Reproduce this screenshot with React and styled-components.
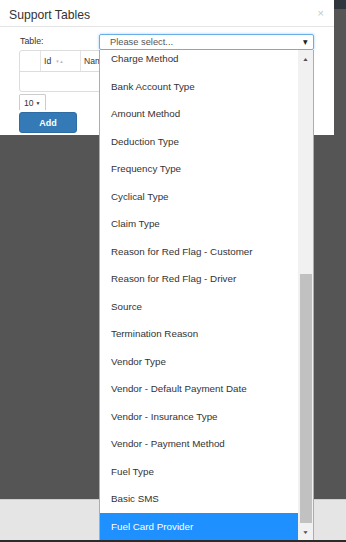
import React from 'react'
import styled, { createGlobalStyle } from 'styled-components'

const GlobalStyle = createGlobalStyle`
  html, body {
    margin: 0;
    padding: 0;
  }
  body {
    font-family: 'Liberation Sans', Arial, sans-serif;
    color: #333;
  }
`

const tables = [
  'Charge Method',
  'Bank Account Type',
  'Amount Method',
  'Deduction Type',
  'Frequency Type',
  'Cyclical Type',
  'Claim Type',
  'Reason for Red Flag - Customer',
  'Reason for Red Flag - Driver',
  'Source',
  'Termination Reason',
  'Vendor Type',
  'Vendor - Default Payment Date',
  'Vendor - Insurance Type',
  'Vendor - Payment Method',
  'Fuel Type',
  'Basic SMS',
  'Fuel Card Provider',
]

const App = () => {
  const selected = 'Fuel Card Provider'
  return (
    <>
      <GlobalStyle />
      <Page>
        <Modal>
          <Header>
            <Title>Support Tables</Title>
            <Close>×</Close>
          </Header>
          <Body>
            <FieldRow>
              <Label>Table:</Label>
              <SelectWrap>
                <Select>
                  <span>Please select...</span>
                  <Caret>▼</Caret>
                </Select>
                <Dropdown>
                  <Options>
                    {tables.map((t) => (
                      <Option key={t} active={t === selected}>
                        {t}
                      </Option>
                    ))}
                  </Options>
                  <Scrollbar>
                    <ScrollArrow>▲</ScrollArrow>
                    <Track>
                      <Thumb />
                    </Track>
                    <ScrollArrow>▼</ScrollArrow>
                  </Scrollbar>
                </Dropdown>
              </SelectWrap>
            </FieldRow>
            <Table>
              <HeadRow>
                <Cell width={21} />
                <Cell width={40}>
                  Id <Sort>▼▲</Sort>
                </Cell>
                <Cell>Name</Cell>
              </HeadRow>
              <BodyRow />
            </Table>
            <PageSize>
              10 <small>▼</small>
            </PageSize>
            <AddButton>Add</AddButton>
          </Body>
        </Modal>
        <Spacer />
        <Footer />
        <BottomLine />
      </Page>
    </>
  )
}

const Page = styled.div`
  width: 346px;
  height: 542px;
  display: flex;
  flex-direction: column;
  background: linear-gradient(#2f363d 0 9px, #555 9px);
  overflow: hidden;
`

const Modal = styled.div`
  width: 334px;
  height: 135px;
  background: #fff;
  flex-shrink: 0;
  position: relative;
  z-index: 2;
`

const Header = styled.div`
  height: 26px;
  border-bottom: 1px solid #e5e5e5;
  display: flex;
  align-items: center;
  justify-content: space-between;
  padding: 0 10px 0 9px;
`

const Title = styled.h4`
  margin: 0;
  font-size: 12.2px;
  font-weight: normal;
  color: #333;
  padding-top: 3px;
`

const Close = styled.span`
  font-size: 11px;
  color: #c8c8c8;
  margin-top: -1px;
`

const Body = styled.div`
  padding: 7px 0 0 19px;
`

const FieldRow = styled.div`
  display: flex;
  align-items: center;
  height: 16px;
`

const Label = styled.label`
  width: 80px;
  font-size: 8.8px;
  color: #333;
  padding-left: 1px;
  margin-top: -2px;
`

const SelectWrap = styled.div`
  position: relative;
  width: 215px;
  margin-left: -1px;
`

const Select = styled.div`
  box-sizing: border-box;
  height: 16px;
  border: 1px solid #66afe9;
  border-radius: 2px;
  box-shadow: 0 0 3px rgba(102, 175, 233, 0.6);
  display: flex;
  align-items: center;
  justify-content: space-between;
  padding: 0 4px 0 10px;
  font-size: 9.3px;
  color: #555;
`

const Caret = styled.span`
  font-size: 8.5px;
  color: #222;
  transform: scaleX(0.9);
`

const Dropdown = styled.div`
  position: absolute;
  top: 100%;
  left: 0;
  width: 215px;
  height: 490px;
  box-sizing: border-box;
  border-left: 1px solid #8db3e2;
  border-right: 1px solid #8db3e2;
  background: #fff;
  display: flex;
  z-index: 5;
`

const Options = styled.div`
  flex: 1;
  overflow: hidden;
`

const Option = styled.div`
  height: 27.5px;
  display: flex;
  align-items: center;
  padding-left: 11px;
  font-size: 9.8px;
  color: ${(p) => (p.active ? '#fff' : '#333')};
  background: ${(p) => (p.active ? '#1e90ff' : 'transparent')};
  &:first-child {
    margin-top: -5px;
  }
`

const Scrollbar = styled.div`
  width: 15px;
  background: #f1f1f1;
  display: flex;
  flex-direction: column;
  align-items: center;
`

const ScrollArrow = styled.div`
  height: 17px;
  font-size: 5px;
  color: #505050;
  display: flex;
  align-items: center;
  justify-content: center;
  transform: scaleX(1.4);
`

const Track = styled.div`
  flex: 1;
  width: 100%;
  display: flex;
  flex-direction: column;
  justify-content: flex-end;
  align-items: center;
`

const Thumb = styled.div`
  width: 12px;
  height: 249px;
  background: #c1c1c1;
`

const Table = styled.div`
  width: 290px;
  border: 1px solid #ddd;
  border-radius: 3px;
  box-sizing: border-box;
`

const HeadRow = styled.div`
  display: flex;
  height: 20px;
  border-bottom: 1px solid #ddd;
`

const Cell = styled.div`
  box-sizing: border-box;
  ${(p) => (p.width ? `width: ${p.width}px;` : 'flex: 1;')}
  border-right: 1px solid #e4e4e4;
  display: flex;
  align-items: center;
  padding-left: 3px;
  font-size: 8.6px;
  color: #333;
  &:last-child {
    border-right: none;
  }
`

const Sort = styled.span`
  font-size: 4.5px;
  color: #bbb;
  margin-left: 4px;
  letter-spacing: -0.3px;
`

const BodyRow = styled.div`
  height: 19px;
`

const PageSize = styled.div`
  margin-top: 2px;
  width: 27px;
  height: 16px;
  box-sizing: border-box;
  border: 1px solid #ccc;
  border-bottom: none;
  border-radius: 2px 2px 0 0;
  font-size: 8.6px;
  color: #333;
  display: flex;
  align-items: center;
  padding-left: 4px;
  gap: 2px;
  small {
    font-size: 5px;
  }
`

const AddButton = styled.button`
  margin-top: 2px;
  width: 58px;
  height: 21px;
  background: #337ab7;
  border: 1px solid #2e6da4;
  border-radius: 3px;
  color: #fff;
  font-family: 'Liberation Sans', Arial, sans-serif;
  font-weight: bold;
  font-size: 9px;
  padding: 0;
`

const Spacer = styled.div`
  flex: 1;
`

const Footer = styled.div`
  height: 40px;
  flex-shrink: 0;
  background: #e5e5e5;
  border-top: 1px solid #cfcfcf;
`

const BottomLine = styled.div`
  height: 2px;
  flex-shrink: 0;
  background: #2b2b2b;
`

export default App
